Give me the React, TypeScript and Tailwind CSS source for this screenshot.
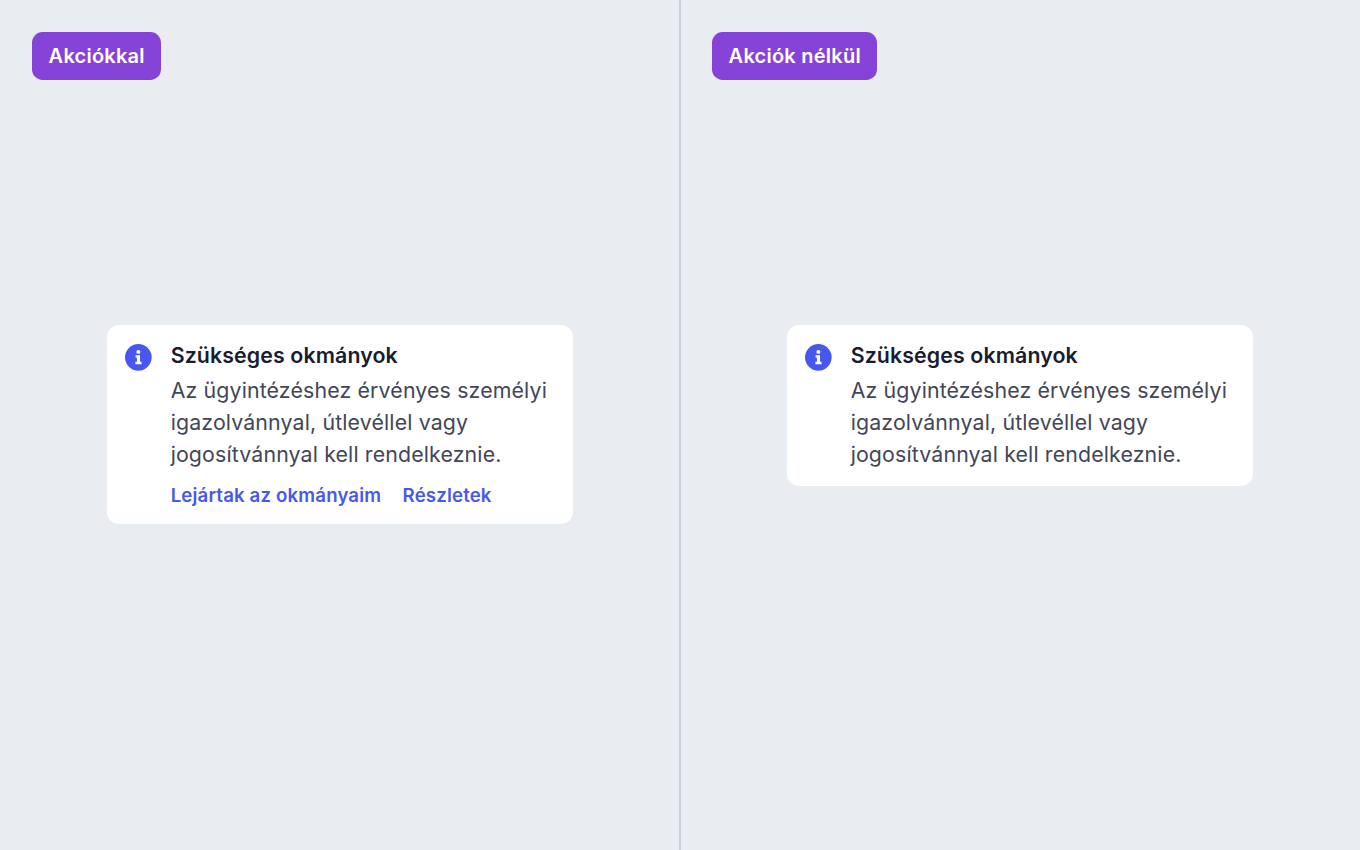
const font = "[font-family:Inter,'Noto_Sans',sans-serif]";

function InfoIcon() {
  return (
    <svg width="26.67" height="26.67" viewBox="0 0 27 27" className="shrink-0">
      <circle cx="13.5" cy="13.5" r="13.5" fill="#4658ee" />
      <circle cx="13.5" cy="8" r="2" fill="#fff" />
      <path d="M10.7 11.4h4.5v6.7h1.5v2.4H10.5v-2.4h1.6v-4.3h-1.4z" fill="#fff" />
    </svg>
  );
}

function Card({ actions }: { actions?: boolean }) {
  return (
    <div className="flex w-[466.67px] gap-[18.67px] rounded-[12px] bg-white pb-4 pl-[18.67px] pr-4 pt-[13.33px]">
      <div className="pt-[5.33px]"><InfoIcon /></div>
      <div className="min-w-0 flex-1">
        <div className="mb-[3.27px] text-[21.33px] font-semibold leading-[32px] tracking-[0.12px] text-[#1a1c30]">Szükséges okmányok</div>
        <p className="text-[21.33px] font-normal leading-[32px] tracking-[0.14px] text-[#42465a]">
          Az ügyintézéshez érvényes személyi igazolvánnyal, útlevéllel vagy jogosítvánnyal kell rendelkeznie.
        </p>
        {actions && (
          <div className="mt-[15.4px] flex gap-[21.33px] text-[18.67px] font-semibold leading-[22.67px] tracking-[0.15px] text-[#4658ee]">
            <span>Lejártak az okmányaim</span>
            <span>Részletek</span>
          </div>
        )}
      </div>
    </div>
  );
}

function Panel({ label, actions, divider }: { label: string; actions?: boolean; divider?: boolean }) {
  return (
    <section className={`flex h-[850px] w-[680px] flex-col p-8 ${divider ? "shadow-[inset_-1px_0_0_#c9ced6,1px_0_0_#c9ced6]" : ""}`}>
      <div className="self-start rounded-[10.67px] bg-[#8643d8] px-[16.6px] py-[10.67px] text-[20px] font-semibold leading-[26.67px] tracking-[0.24px] text-white">{label}</div>
      <div className="mt-[245.33px] flex justify-center">
        <Card actions={actions} />
      </div>
    </section>
  );
}

export default function App() {
  return (
    <main className={`flex h-[850px] w-[1360px] overflow-hidden bg-[#e9ecf1] ${font}`}>
      <Panel label="Akciókkal" divider actions />
      <Panel label="Akciók nélkül" />
    </main>
  );
}
